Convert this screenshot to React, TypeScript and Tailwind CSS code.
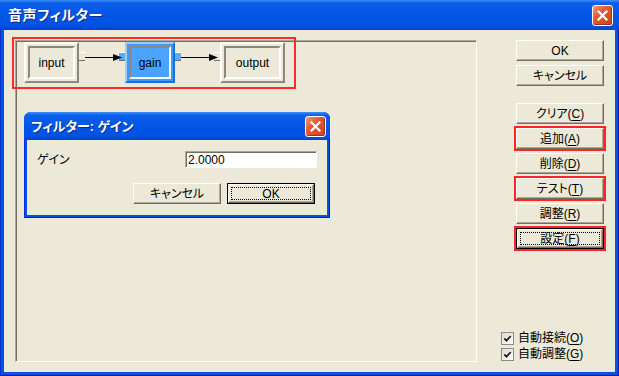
import React from 'react';

function Mn({ c }: { c: string }) {
  return <span className="underline underline-offset-[2px] decoration-1">{c}</span>;
}

function CloseBtn() {
  return (
    <div className="w-[21px] h-[21px] rounded-[3px] border border-white bg-[linear-gradient(135deg,#f39a7c_0%,#e4592f_40%,#cc4220_100%)] shadow-[inset_-1px_-1px_0_#a3301a] flex items-center justify-center">
      <svg width="11" height="11" viewBox="0 0 11 11">
        <path d="M1.5 1.5 L9.5 9.5 M9.5 1.5 L1.5 9.5" stroke="#fff" strokeWidth="2.2" strokeLinecap="square" />
      </svg>
    </div>
  );
}

interface BtnProps {
  children: React.ReactNode;
  def?: boolean;
  red?: boolean;
  className?: string;
}

function Btn({ children, def, red, className = '' }: BtnProps) {
  return (
    <div
      className={`relative w-[88px] h-[21px] shrink-0 ${def ? 'border border-black' : ''} ${
        red ? 'outline-2 outline-[#ff2424] outline-offset-0' : ''
      } ${className}`}
    >
      <div className="w-full h-full bg-[#ece9d8] border border-t-white border-l-white border-r-[#716f64] border-b-[#716f64] shadow-[inset_-1px_-1px_0_#aca899] flex items-center justify-center text-[12px] leading-none text-black">
        {children}
      </div>
      {def && <div className="absolute inset-[3px] border border-dotted border-black" />}
    </div>
  );
}

function Check({ children }: { children: React.ReactNode }) {
  return (
    <div className="flex items-center h-[16px] gap-[4px]">
      <div className="w-[13px] h-[13px] border border-[#8d8c84] bg-[linear-gradient(135deg,#dcdbd3,#ffffff)] flex items-center justify-center">
        <svg width="9" height="9" viewBox="0 0 9 9">
          <path d="M1.3 4.3 L3.5 6.6 L7.8 2" stroke="#1e1e1e" strokeWidth="1.8" fill="none" />
        </svg>
      </div>
      <span className="text-[12px] leading-none text-black">{children}</span>
    </div>
  );
}

interface NodeProps {
  label: string;
  left: number;
  width: number;
  active?: boolean;
}

function GraphNode({ label, left, width, active }: NodeProps) {
  const outer = active
    ? 'bg-[#3f9aff] border-t-[#9ccbff] border-l-[#9ccbff] border-r-[#1c6fd6] border-b-[#1c6fd6]'
    : 'bg-[#ece9d8] border-t-white border-l-white border-r-[#8c897c] border-b-[#8c897c]';
  const inner = active ? 'bg-[#4aa3ff]' : 'bg-[#ece9d8]';
  return (
    <div className={`absolute top-[1px] h-[41px] border-2 p-[2px] ${outer}`} style={{ left, width }}>
      <div
        className={`w-full h-full border-2 border-t-[#8c897c] border-l-[#8c897c] border-r-white border-b-white flex items-center justify-center text-[12px] text-black ${inner}`}
      >
        {label}
      </div>
    </div>
  );
}

function Port({ left, active }: { left: number; active?: boolean }) {
  return (
    <div
      className={`absolute top-[11px] w-[6px] h-[9px] border-t border-t-white border-b border-b-[#716f64] ${
        active ? 'bg-[#5aaaff]' : 'bg-[#ece9d8]'
      }`}
      style={{ left }}
    />
  );
}

function FilterGraph() {
  return (
    <>
      <GraphNode label="input" left={8} width={55} />
      <GraphNode label="gain" left={109} width={50} active />
      <GraphNode label="output" left={204} width={65} />
      <Port left={63} />
      <Port left={103} active />
      <Port left={159} active />
      <Port left={198} />
      <svg className="absolute left-0 top-0" width="280" height="40">
        <line x1="69" y1="16.5" x2="99" y2="16.5" stroke="#000" strokeWidth="1" />
        <path d="M97 13 L106 16.5 L97 20 Z" fill="#000" />
        <line x1="165" y1="16.5" x2="195" y2="16.5" stroke="#000" strokeWidth="1" />
        <path d="M193 13 L202 16.5 L193 20 Z" fill="#000" />
      </svg>
      <div className="absolute left-[-4px] top-[-4px] w-[284px] h-[52px] border-2 border-[#ff2a2a]" />
    </>
  );
}

function GainDialog() {
  return (
    <div className="absolute left-[8px] top-[71px] w-[306px] h-[106px] rounded-t-[7px] bg-[#0a4fe2] shadow-[inset_1px_0_0_#0831d9,inset_-1px_0_0_#0020a8,inset_0_-1px_0_#0020a8] flex flex-col">
      <div className="h-[28px] shrink-0 rounded-t-[7px] bg-[linear-gradient(to_bottom,#3d8ff7_0%,#0b5ee9_12%,#0055e5_55%,#0053e2_85%,#0044cf_100%)] flex items-center pl-[7px] pr-[4px] justify-between">
        <span className="text-white font-bold text-[13px] leading-none [text-shadow:1px_1px_0_#0b2a8a]">
          フィルター: ゲイン
        </span>
        <CloseBtn />
      </div>
      <div className="mx-[3px] mb-[3px] flex-1 bg-[#ece9d8] flex flex-col pt-[11px]">
        <div className="flex items-center justify-between pl-[10px] pr-[10px]">
          <span className="text-[12px] leading-none text-black">ゲイン</span>
          <div className="w-[132px] h-[17px] bg-white border border-t-[#aca899] border-l-[#aca899] border-r-white border-b-white shadow-[inset_1px_1px_0_#716f64] flex items-center pl-[2px] text-[12px] leading-none text-black">
            2.0000
          </div>
        </div>
        <div className="flex justify-end gap-[6px] pr-[12px] mt-[15px]">
          <Btn>キャンセル</Btn>
          <Btn def>OK</Btn>
        </div>
      </div>
    </div>
  );
}

export default function App() {
  return (
    <div className="w-[619px] h-[376px] bg-[#0a4fe2] shadow-[inset_1px_0_0_#0831d9,inset_-1px_0_0_#001ea0,inset_0_-1px_0_#001ea0] flex flex-col overflow-hidden [font-family:'Liberation_Sans','Noto_Sans_CJK_JP',sans-serif] [font-feature-settings:'palt']">
      <div className="h-[30px] shrink-0 bg-[linear-gradient(to_bottom,#3d8ff7_0%,#0b5ee9_10%,#0055e5_55%,#0053e2_85%,#0044cf_100%)] flex items-center justify-between pl-[8px] pr-[6px]">
        <span className="text-white font-bold text-[14px] leading-none tracking-[0.5px] [text-shadow:1px_1px_0_#0b2a8a]">
          音声フィルター
        </span>
        <CloseBtn />
      </div>
      <div className="flex-1 mx-[4px] mb-[4px] bg-[#ece9d8] flex">
        <div className="relative ml-[11px] mt-[10px] w-[462px] h-[322px] border border-t-[#aca899] border-l-[#aca899] border-r-white border-b-white shadow-[inset_1px_1px_0_#716f64]">
          <FilterGraph />
          <GainDialog />
        </div>
        <div className="ml-[24px] flex flex-col pt-[10px] pb-[10px] flex-1">
          <div className="flex flex-col gap-[4px] pl-[15px]">
            <Btn>OK</Btn>
            <Btn>キャンセル</Btn>
          </div>
          <div className="flex flex-col gap-[4px] pl-[15px] mt-[17px]">
            <Btn>
              クリア(<Mn c="C" />)
            </Btn>
            <Btn red>
              追加(<Mn c="A" />)
            </Btn>
            <Btn>
              削除(<Mn c="D" />)
            </Btn>
            <Btn red>
              テスト(<Mn c="T" />)
            </Btn>
            <Btn>
              調整(<Mn c="R" />)
            </Btn>
            <Btn def red>
              設定(<Mn c="F" />)
            </Btn>
          </div>
          <div className="flex-1" />
          <Check>
            自動接続(<Mn c="O" />)
          </Check>
          <Check>
            自動調整(<Mn c="G" />)
          </Check>
        </div>
      </div>
    </div>
  );
}
